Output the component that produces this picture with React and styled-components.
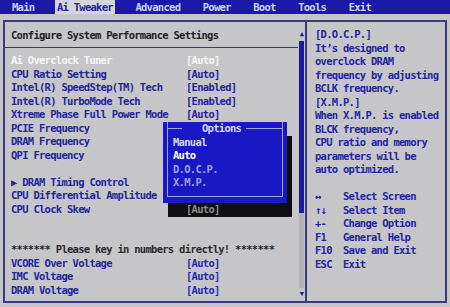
import React from "react";
import styled, { createGlobalStyle } from "styled-components";

const colors = {
  gray: "#c6c6c8",
  navy: "#25259c",
  bar: "#1a1aa6",
  border: "#3a3a82",
  popup: "#1818c4",
  ink: "#1e1e2a",
};

const GlobalStyle = createGlobalStyle`
  body {
    margin: 0;
    background: ${colors.gray};
    font-family: "DejaVu Sans Mono", "Liberation Mono", monospace;
    font-weight: bold;
    font-size: 10.5px;
    letter-spacing: -0.72px;
  }
`;

const Screen = styled.div`
  width: 450px;
  height: 307px;
  display: flex;
  flex-direction: column;
  background: ${colors.gray};
  overflow: hidden;
`;

const TabBar = styled.div`
  height: 14px;
  background: ${colors.bar};
  display: flex;
  padding-left: 10px;
  gap: 18.5px;
`;

const Tab = styled.div`
  padding: 0 2px;
  line-height: 14px;
  color: ${({ $active }) => ($active ? "#2222a2" : "#c8d4f8")};
  background: ${({ $active }) => ($active ? "#d4d4dc" : "transparent")};
`;

const Body = styled.div`
  flex: 1;
  padding: 6px 3px 4px 3px;
`;

const Frame = styled.div`
  height: 100%;
  box-sizing: border-box;
  border: 2px solid ${colors.border};
  display: flex;
`;

const LeftPanel = styled.div`
  width: 300px;
  display: flex;
  position: relative;
`;

const Content = styled.div`
  flex: 1;
  display: flex;
  flex-direction: column;
`;

const Header = styled.div`
  height: 25px;
  border-bottom: 1px solid ${colors.border};
  padding-left: 6px;
  display: flex;
  align-items: center;
  color: ${colors.ink};
`;

const List = styled.div`
  padding: 6px 0 0 6px;
`;

const Row = styled.div`
  display: flex;
  height: 13.5px;
  line-height: 13.5px;
  white-space: pre;
  color: ${({ $tone }) =>
    $tone === "active" ? "#f6f6f6" : $tone === "note" ? "#2a2a30" : colors.navy};
`;

const Label = styled.span`
  flex: 0 0 175px;
`;

const Value = styled.span`
  color: ${({ $bright }) => ($bright ? "#2a2ab8" : "inherit")};
  ${({ $shadowed }) =>
    $shadowed && "position: relative; z-index: 3; color: #8a8a8a;"}
`;

const ScrollCol = styled.div`
  width: 7px;
  display: flex;
  flex-direction: column;
  align-items: center;
  padding-top: 6px;
`;

const Arrow = styled.div`
  height: 13px;
  font-size: 7px;
  line-height: 13px;
  color: #1c1ca0;
`;

const Thumb = styled.div`
  width: 5px;
  height: 172px;
  background: #1c1ca0;
`;

const Track = styled.div`
  width: 5px;
  flex: 1;
  background: #b2b2ba;
`;

const RightPanel = styled.div`
  flex: 1;
  border-left: 2px solid ${colors.border};
  padding: 6px 0 0 8px;
  color: #2424a4;
`;

const HelpLine = styled.div`
  height: 13.5px;
  line-height: 13.5px;
  white-space: pre;
`;

const KeyRow = styled.div`
  display: flex;
  height: 13.5px;
  line-height: 13.5px;
`;

const KeyName = styled.span`
  flex: 0 0 28px;
`;

const Popup = styled.div`
  position: absolute;
  left: 158px;
  top: 100px;
  width: 124px;
  height: 81px;
  box-sizing: border-box;
  background: ${colors.popup};
  box-shadow: 5px 14px 0 #101012;
  z-index: 2;
  padding: 0 4px 6px 4px;
`;

const OptionFrame = styled.div`
  height: 100%;
  box-sizing: border-box;
  border: 1px solid #a4a4ea;
  border-top: none;
  display: flex;
  flex-direction: column;
`;

const TitleRow = styled.div`
  height: 13.5px;
  line-height: 13.5px;
  display: flex;
  align-items: center;
  margin: 0 -1px;
  color: #d8d8ff;
  &::before,
  &::after {
    content: "";
    height: 1px;
    background: #a4a4ea;
  }
  &::before {
    width: 15px;
    margin-right: 20px;
  }
  &::after {
    flex: 1;
    margin-left: 5px;
  }
`;

const Option = styled.div`
  height: 13.5px;
  line-height: 13.5px;
  padding-left: 5px;
  color: ${({ $state }) =>
    $state === "current" ? "#ffffff" : $state === "dim" ? "#a0a0e6" : "#d6d6ee"};
`;

const tabs = ["Main", "Ai Tweaker", "Advanced", "Power", "Boot", "Tools", "Exit"];

// values hidden under the Options popup are left out
const rows = [
  { label: "Ai Overclock Tuner", value: "[Auto]", tone: "active" },
  { label: "CPU Ratio Setting", value: "[Auto]" },
  { label: "Intel(R) SpeedStep(TM) Tech", value: "[Enabled]" },
  { label: "Intel(R) TurboMode Tech", value: "[Enabled]" },
  { label: "Xtreme Phase Full Power Mode", value: "[Auto]" },
  { label: "PCIE Frequency" },
  { label: "DRAM Frequency" },
  { label: "QPI Frequency" },
  { label: "" },
  { label: "\u25B6 DRAM Timing Control" },
  { label: "CPU Differential Amplitude" },
  { label: "CPU Clock Skew", value: "[Auto]", shadowed: true },
  { label: "" },
  { label: "" },
  { label: "******* Please key in numbers directly! *******", tone: "note", wide: true },
  { label: "VCORE Over Voltage", value: "[Auto]", bright: true },
  { label: "IMC Voltage", value: "[Auto]", bright: true },
  { label: "DRAM Voltage", value: "[Auto]", bright: true },
];

const help = [
  "[D.O.C.P.]",
  "It\u2019s designed to",
  "overclock DRAM",
  "frequency by adjusting",
  "BCLK frequency.",
  "[X.M.P.]",
  "When X.M.P. is enabled",
  "BLCK frequency,",
  "CPU ratio and memory",
  "parameters will be",
  "auto optimized.",
  " ",
];

const keys = [
  ["\u2194", "Select Screen"],
  ["\u2191\u2193", "Select Item"],
  ["+-", "Change Option"],
  ["F1", "General Help"],
  ["F10", "Save and Exit"],
  ["ESC", "Exit"],
];

const options = [
  { name: "Manual" },
  { name: "Auto", state: "current" },
  { name: "D.O.C.P.", state: "dim" },
  { name: "X.M.P.", state: "dim" },
];

export default function App() {
  return (
    <>
      <GlobalStyle />
      <Screen>
        <TabBar>
          {tabs.map((t) => (
            <Tab key={t} $active={t === "Ai Tweaker"}>
              {t}
            </Tab>
          ))}
        </TabBar>
        <Body>
          <Frame>
            <LeftPanel>
              <Content>
                <Header>Configure System Performance Settings</Header>
                <List>
                  {rows.map((r, i) => (
                    <Row key={i} $tone={r.tone}>
                      {r.wide ? r.label : <Label>{r.label}</Label>}
                      {r.value && (
                        <Value $bright={r.bright} $shadowed={r.shadowed}>
                          {r.value}
                        </Value>
                      )}
                    </Row>
                  ))}
                </List>
              </Content>
              <ScrollCol>
                <Arrow>{"\u25B2"}</Arrow>
                <Thumb />
                <Track />
                <Arrow>{"\u25BC"}</Arrow>
              </ScrollCol>
              <Popup>
                <OptionFrame>
                  <TitleRow>Options</TitleRow>
                  {options.map((o) => (
                    <Option key={o.name} $state={o.state}>
                      {o.name}
                    </Option>
                  ))}
                </OptionFrame>
              </Popup>
            </LeftPanel>
            <RightPanel>
              {help.map((h, i) => (
                <HelpLine key={i}>{h}</HelpLine>
              ))}
              {keys.map(([k, d]) => (
                <KeyRow key={k}>
                  <KeyName>{k}</KeyName>
                  <span>{d}</span>
                </KeyRow>
              ))}
            </RightPanel>
          </Frame>
        </Body>
      </Screen>
    </>
  );
}
